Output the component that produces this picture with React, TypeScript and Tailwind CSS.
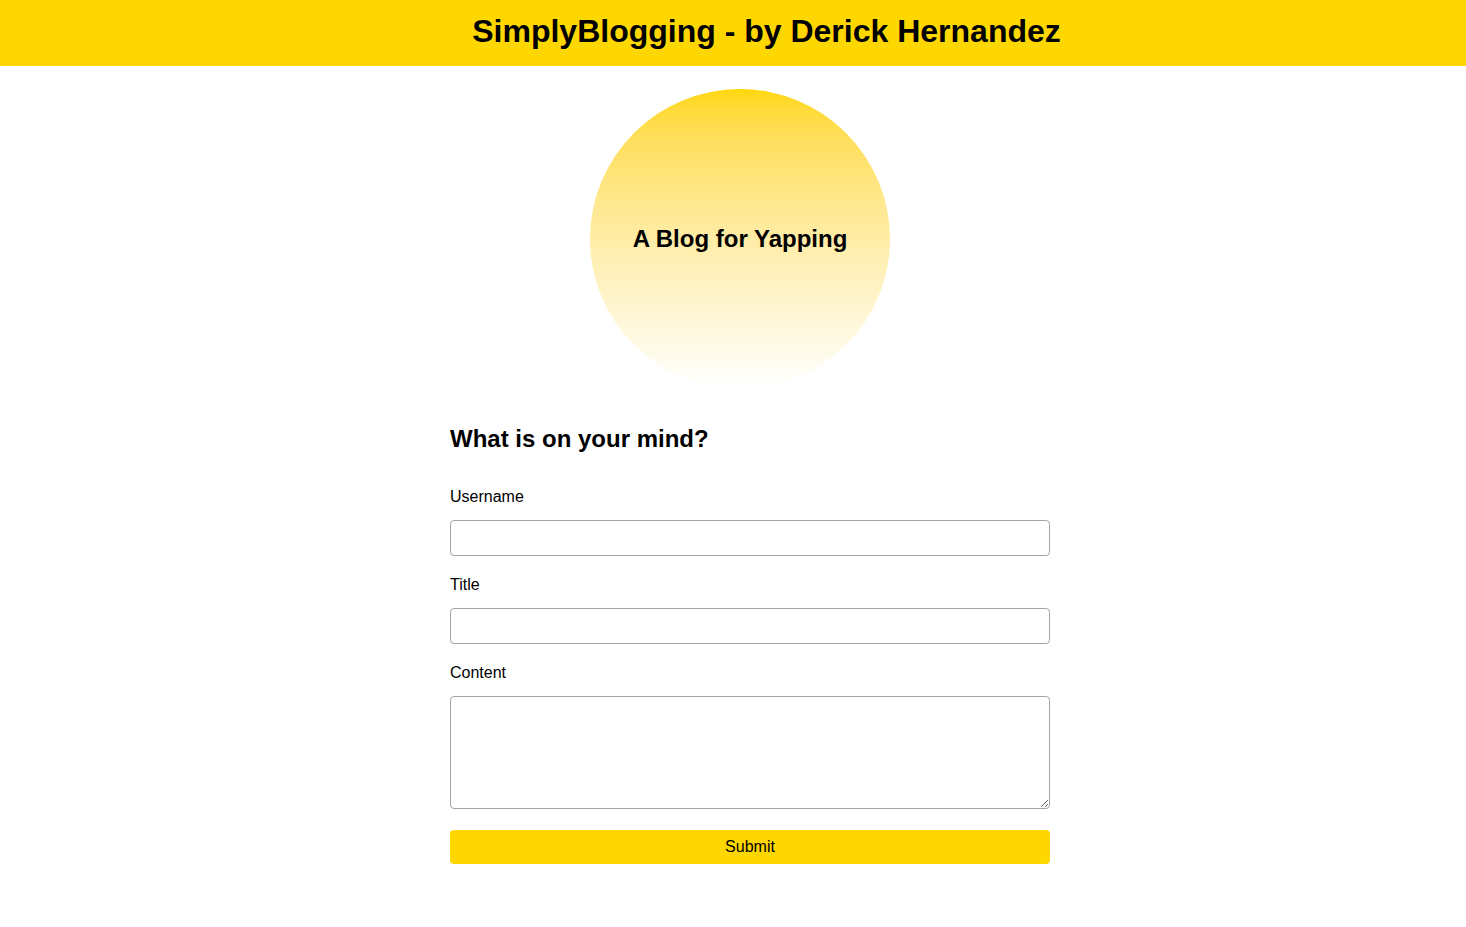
import { useState } from "react";

const App = () => {
  const [username, setUsername] = useState("");
  const [title, setTitle] = useState("");
  const [content, setContent] = useState("");

  return (
    <div className="min-h-screen bg-white font-['Liberation_Sans',Arial,sans-serif] leading-[1.15] text-black">
      {/* Header */}
      <header className="h-[66px] bg-[#ffd700] flex items-center justify-center pl-[67px] pb-[4px]">
        <h1 className="text-[32px] font-bold leading-none">
          SimplyBlogging - by Derick Hernandez
        </h1>
      </header>

      {/* Hero circle */}
      <div className="flex justify-center pt-[23px] pl-[14px]">
        <div className="w-[300px] h-[300px] rounded-full bg-gradient-to-b from-[#ffd700] to-white flex items-center justify-center">
          <h2 className="text-[24px] font-bold">A Blog for Yapping</h2>
        </div>
      </div>

      {/* Form */}
      <div className="flex justify-center pl-[34px] mt-[36px]">
        <form
          className="w-[600px] flex flex-col"
          onSubmit={(e) => e.preventDefault()}
        >
          <h2 className="text-[24px] font-bold leading-[28px] mb-[35px]">
            What is on your mind?
          </h2>

          <label className="block text-[16px] leading-[18px] mb-[14px]">Username</label>
          <input
            value={username}
            onChange={(e) => setUsername(e.target.value)}
            className="h-[36px] w-full border border-[#a3a3a3] rounded-[4px] px-2 mb-[20px] outline-none"
          />

          <label className="block text-[16px] leading-[18px] mb-[14px]">Title</label>
          <input
            value={title}
            onChange={(e) => setTitle(e.target.value)}
            className="h-[36px] w-full border border-[#a3a3a3] rounded-[4px] px-2 mb-[20px] outline-none"
          />

          <label className="block text-[16px] leading-[18px] mb-[14px]">Content</label>
          <textarea
            value={content}
            onChange={(e) => setContent(e.target.value)}
            className="h-[113px] w-full border border-[#a3a3a3] rounded-[4px] px-2 py-1 mb-[21px] outline-none"
          />

          <button
            type="submit"
            className="h-[34px] w-full bg-[#ffd700] rounded-[4px] text-[16px]"
          >
            Submit
          </button>
        </form>
      </div>
    </div>
  );
};

export default App;
